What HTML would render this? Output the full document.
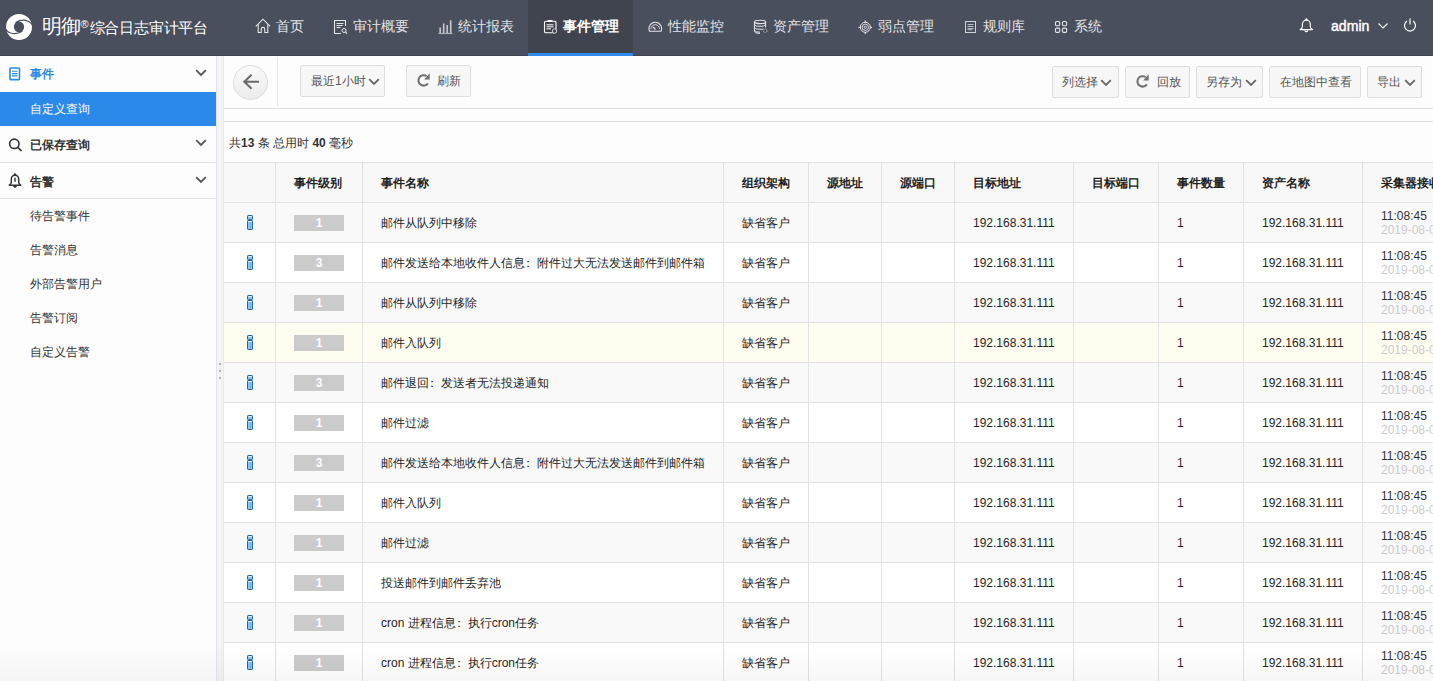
<!DOCTYPE html>
<html><head><meta charset="utf-8">
<style>
*{box-sizing:border-box;margin:0;padding:0}
html,body{width:1433px;height:681px;overflow:hidden;background:#fdfdfd;font-family:"Liberation Sans",sans-serif;color:#333}
#hdr{position:absolute;left:0;top:0;width:1433px;height:56px;background:#4a4f5d;border-bottom:1px solid #40444f}
#logo{position:absolute;left:6px;top:14px;width:26px;height:26px}
#brand{position:absolute;left:42px;top:13px;color:#fff;white-space:nowrap}
#brand .b1{font-size:20px;letter-spacing:-1px}
#brand .r{font-size:11px;vertical-align:5px;margin-left:0.5px;margin-right:1px}
#brand .b2{font-size:15px;letter-spacing:-0.2px}
.nav{position:absolute;top:0;height:56px;color:#e2e3e6;font-size:14px;white-space:nowrap}
.nav .t{position:absolute;top:15.6px;line-height:20px}
.nav svg{position:absolute}
.nav.act{background:#40444f;color:#fff}
.nav.act:after{content:"";position:absolute;left:0;right:0;bottom:0;height:3px;background:#2d8ae9}
#side{position:absolute;left:0;top:56px;width:217px;height:625px;background:#fdfdfd;border-right:1px solid #e4e4ee}
.sh{position:absolute;left:0;width:216px;font-size:12px;font-weight:bold;color:#333}
.sh .t{position:absolute;left:30px}
.si{position:absolute;left:30px;font-size:12px;color:#333}
#split{position:absolute;left:217px;top:56px;width:7px;height:625px;background:#f3f3f3;border-right:1px solid #e8e8e8}
#main{position:absolute;left:224px;top:56px;width:1209px;height:625px;background:#fdfdfd;overflow:hidden}
.btn{position:absolute;top:9px;height:32px;background:#f7f7f7;border:1px solid #dedede;border-radius:2px;font-size:12px;color:#555;white-space:nowrap}
.btn .t{position:absolute;top:8px;line-height:14px}
table{position:absolute;left:0;top:106px;width:1289px;border-collapse:separate;border-spacing:0;table-layout:fixed;font-size:12px}
td,th{border-right:1px solid #e2e2e2;border-bottom:1px solid #e2e2e2;height:40px;padding:1px 0 0 18px;text-align:left;white-space:nowrap;overflow:hidden}
th{border-top:1px solid #e2e2e2;height:41px}
th{background:#f8f8f8;font-weight:bold;color:#222}
tr.o td{background:#f9f9f9}
tr.e td{background:#fff}
tr.h td{background:#fffdf0}
td{color:#262626}
.lv{display:inline-block;width:50px;height:16px;background:#cbcbcb;color:#fff;text-align:center;line-height:16px;font-size:12px;font-weight:bold;vertical-align:middle}
.ico{display:block;margin-left:5px;margin-top:-1px}
.tm{line-height:14px;color:#333}
.tm span{color:#ccc}
</style></head><body>
<div id="hdr">
 <svg id="logo" viewBox="0 0 26 26"><circle cx="13" cy="13" r="13" fill="#fff"/><ellipse cx="13" cy="12.9" rx="5.1" ry="5.5" fill="#4a4f5d"/><path d="M9.6 8.6 Q14 5.8 19.5 6.3 Q24 7 26.6 11.3" fill="none" stroke="#4a4f5d" stroke-width="1.25"/><path d="M16.4 17.2 Q12 20 6.5 19.5 Q2 19 -0.6 14.7" fill="none" stroke="#4a4f5d" stroke-width="1.25"/></svg>
 <div id="brand"><span class="b1">明御</span><span class="r">®</span><span class="b2">综合日志审计平台</span></div>
 <div class="nav" style="left:241px;width:77px"><svg width="17" height="16" style="left:14px;top:18px" viewBox="0 0 17 16"><path d="M0.8 8.3L8 1.2L15.2 8.3" fill="none" stroke="#e4e5e8" stroke-width="1.1"/><path d="M3.2 6.3V14.5H6.2V11.2A1.8 1.8 0 0 1 9.8 11.2V14.5H12.8V6.3" fill="none" stroke="#e4e5e8" stroke-width="1.1"/></svg><span class="t" style="left:35px">首页</span></div>
 <div class="nav" style="left:318px;width:105px"><svg width="15" height="16" style="left:15px;top:19px" viewBox="0 0 15 16"><path d="M12.5 7V1.5H1.5V14.5H8" fill="none" stroke="#e4e5e8" stroke-width="1.1"/><path d="M3.5 4.5H10.5M3.5 6.5H9.5M3.5 8.5H7.5" stroke="#e4e5e8" stroke-width="1"/><circle cx="11" cy="11.5" r="2" fill="none" stroke="#e4e5e8" stroke-width="1"/><path d="M12.4 13L14 14.6" stroke="#e4e5e8" stroke-width="1.1"/></svg><span class="t" style="left:35px">审计概要</span></div>
 <div class="nav" style="left:423px;width:105px"><svg width="15" height="16" style="left:15px;top:19px" viewBox="0 0 15 16"><path d="M2.2 14V8.5M5.7 14V4.5M9.2 14V6M12.7 14V1.2" stroke="#c4c6cc" stroke-width="1.7"/><path d="M0.5 14.5H14.5" stroke="#aeb0b8" stroke-width="1.2"/></svg><span class="t" style="left:35px">统计报表</span></div>
 <div class="nav act" style="left:528px;width:105px"><svg width="16" height="16" style="left:15px;top:19px" viewBox="0 0 16 16"><rect x="1.5" y="2.3" width="11.5" height="11.5" rx="1.2" fill="none" stroke="#fff" stroke-width="1.1"/><rect x="4.5" y="1" width="5" height="2" rx="0.8" fill="#fff"/><path d="M3.5 5.8H10.5M3.5 7.8H10.5M3.5 9.8H8" stroke="#fff" stroke-width="1"/><circle cx="11.5" cy="12" r="2.2" fill="#40444f" stroke="#cfd0d4" stroke-width="1"/></svg><span class="t" style="left:35px;font-weight:bold">事件管理</span></div>
 <div class="nav" style="left:633px;width:105px"><svg width="15" height="14" style="left:15px;top:20px" viewBox="0 0 15 14"><path d="M1.6 11.3A6.3 6.3 0 1 1 13 11.3Z" fill="none" stroke="#e4e5e8" stroke-width="1.1"/><path d="M3.1 8.9A4.2 4.2 0 0 1 11.5 8.9" fill="none" stroke="#e4e5e8" stroke-width="0.9"/><path d="M5.2 6.9L7.4 9.6" stroke="#e4e5e8" stroke-width="1.4"/></svg><span class="t" style="left:35px">性能监控</span></div>
 <div class="nav" style="left:738px;width:105px"><svg width="16" height="16" style="left:15px;top:19px" viewBox="0 0 16 16"><ellipse cx="7" cy="2.9" rx="5.6" ry="1.7" fill="none" stroke="#e4e5e8" stroke-width="1.1"/><path d="M1.4 2.9V12.6Q1.6 14.4 7 14.4M12.6 2.9V8.5M1.4 5.8Q3 7.4 7 7.4T12.6 5.8M1.4 8.8Q3 10.3 7 10.3T10.5 10M1.4 11.7Q3 13.2 7 13.2" fill="none" stroke="#e4e5e8" stroke-width="1"/><circle cx="12.2" cy="11.8" r="1.8" fill="none" stroke="#b8bac0" stroke-width="1" stroke-dasharray="1.2 0.7"/></svg><span class="t" style="left:35px">资产管理</span></div>
 <div class="nav" style="left:843px;width:105px"><svg width="15" height="15" style="left:15.3px;top:19.8px" viewBox="0 0 15 15"><circle cx="7.3" cy="7.3" r="5" fill="none" stroke="#e4e5e8" stroke-width="1"/><circle cx="7.3" cy="7.3" r="3.2" fill="none" stroke="#e4e5e8" stroke-width="0.9"/><circle cx="7.3" cy="7.3" r="1.2" fill="none" stroke="#e4e5e8" stroke-width="0.9"/><path d="M7.3 0.6V2.6M7.3 12V14M0.6 7.3H2.5M12.1 7.3H14" stroke="#e4e5e8" stroke-width="1.2"/></svg><span class="t" style="left:35px">弱点管理</span></div>
 <div class="nav" style="left:948px;width:91px"><svg width="13" height="14" style="left:16px;top:20px" viewBox="0 0 13 14"><rect x="1.5" y="1.5" width="10" height="11" fill="none" stroke="#d0d2d7" stroke-width="1"/><path d="M3.5 4.5H9.5M3.5 6.5H9.5M3.5 8.5H9.5M3.5 9.8H8.5" stroke="#c4c6cc" stroke-width="0.9"/></svg><span class="t" style="left:35px">规则库</span></div>
 <div class="nav" style="left:1039px;width:77px"><svg width="14" height="14" style="left:15px;top:20px" viewBox="0 0 14 14"><rect x="1.5" y="1.5" width="4.2" height="4.3" rx="1.2" fill="none" stroke="#e4e5e8" stroke-width="1.1"/><rect x="8.45" y="1.5" width="4.2" height="4.3" rx="1.2" fill="none" stroke="#e4e5e8" stroke-width="1.1"/><rect x="1.5" y="8.1" width="4.2" height="4.3" rx="1.2" fill="none" stroke="#e4e5e8" stroke-width="1.1"/><rect x="8.45" y="8.1" width="4.2" height="4.3" rx="1.2" fill="none" stroke="#e4e5e8" stroke-width="1.1"/></svg><span class="t" style="left:35px">系统</span></div>
 <svg style="position:absolute;left:1299px;top:17px" width="15" height="16" viewBox="0 0 15 16"><path d="M1.2 12.6Q3.3 11.6 3.4 9.5V7.2A3.95 4.1 0 0 1 11.3 7.2V9.5Q11.5 11.6 13.6 12.6Z" fill="none" stroke="#fff" stroke-width="1.15" stroke-linejoin="round"/><circle cx="7.35" cy="2.3" r="1.1" fill="#fff"/><path d="M6 13.3A1.35 1.35 0 0 0 8.7 13.3" fill="none" stroke="#fff" stroke-width="1.1"/></svg>
 <div style="position:absolute;left:1331px;top:16px;font-size:15px;color:#fff;line-height:20px;-webkit-text-stroke:0.45px #fff;transform:scaleX(0.94);transform-origin:0 0">admin</div>
 <svg style="position:absolute;left:1378px;top:23px" width="10" height="6" viewBox="0 0 10 6"><path d="M0.5 0.5L5 5L9.5 0.5" fill="none" stroke="#fff" stroke-width="1.1"/></svg>
 <svg style="position:absolute;left:1403px;top:18px" width="14" height="14" viewBox="0 0 14 14"><path d="M4 3A5.5 5.5 0 1 0 10 3" fill="none" stroke="#fff" stroke-width="1.2"/><path d="M7 0.5V6.5" stroke="#fff" stroke-width="1.2"/></svg>
</div>

<div id="side">
 <div class="sh" style="top:0;height:36px;color:#2b88e5"><svg style="position:absolute;left:9px;top:11px" width="12" height="14" viewBox="0 0 12 14"><rect x="1" y="1" width="9.5" height="11.6" rx="0.8" fill="none" stroke="#2b88e5" stroke-width="1.6"/><path d="M3 4.3H8.5M3 6.6H8.5M3 8.9H8.5" stroke="#2b88e5" stroke-width="1.1"/></svg><span class="t" style="top:10px">事件</span><svg style="position:absolute;left:195px;top:13px" width="12" height="8" viewBox="0 0 12 8"><path d="M1.2 1.2L6 6L10.8 1.2" fill="none" stroke="#555" stroke-width="1.8"/></svg></div>
 <div style="position:absolute;left:0;top:36px;width:216px;height:34px;background:#2b89e9"></div>
 <div class="si" style="top:45px;color:#fff">自定义查询</div>
 <div class="sh" style="top:70px;height:37px;border-bottom:1px solid #e2e2e2"><svg style="position:absolute;left:8px;top:11px" width="16" height="16" viewBox="0 0 16 16"><circle cx="6.3" cy="6.8" r="4.7" fill="none" stroke="#333" stroke-width="1.6"/><path d="M9.8 10.3L13.5 14" stroke="#333" stroke-width="1.7"/></svg><span class="t" style="top:11px">已保存查询</span><svg style="position:absolute;left:195px;top:13px" width="12" height="8" viewBox="0 0 12 8"><path d="M1.2 1.2L6 6L10.8 1.2" fill="none" stroke="#555" stroke-width="1.8"/></svg></div>
 <div class="sh" style="top:107px;height:36px;border-bottom:1px solid #e2e2e2"><svg style="position:absolute;left:8px;top:9px" width="15" height="16" viewBox="0 0 15 16"><path d="M1.3 13.2Q3.2 12.3 3.3 10.3V7.2A3.7 4 0 0 1 10.7 7.2V10.3Q10.8 12.3 12.7 13.2Z" fill="none" stroke="#333" stroke-width="1.5" stroke-linejoin="round"/><circle cx="7" cy="2.4" r="1.2" fill="#333"/><path d="M7 5.8V9.8" stroke="#333" stroke-width="1.4"/><path d="M5.6 14A1.4 1.4 0 0 0 8.4 14Z" fill="#333" stroke="#333" stroke-width="0.8"/></svg><span class="t" style="top:11px">告警</span><svg style="position:absolute;left:195px;top:13px" width="12" height="8" viewBox="0 0 12 8"><path d="M1.2 1.2L6 6L10.8 1.2" fill="none" stroke="#555" stroke-width="1.8"/></svg></div>
 <div class="si" style="top:152px">待告警事件</div>
 <div class="si" style="top:186px">告警消息</div>
 <div class="si" style="top:220px">外部告警用户</div>
 <div class="si" style="top:254px">告警订阅</div>
 <div class="si" style="top:288px">自定义告警</div>
</div>
<div id="split"><div style="position:absolute;left:2px;top:307px;width:2px;height:2px;background:#b4b4b4"></div><div style="position:absolute;left:2px;top:314px;width:2px;height:2px;background:#b4b4b4"></div><div style="position:absolute;left:2px;top:321px;width:2px;height:2px;background:#b4b4b4"></div></div>

<div id="main">
 <div style="position:absolute;left:9px;top:9px;width:35px;height:35px;border-radius:50%;background:linear-gradient(#fafafa,#ececec);border:1px solid #dcdcdc"><svg style="position:absolute;left:-1px;top:-1px" width="35" height="35" viewBox="0 0 35 35"><path d="M26 16.8H11.5M18.6 9.8L11.3 16.8L18.6 23.8" fill="none" stroke="#6a6a6a" stroke-width="2"/></svg></div>
 <div style="position:absolute;left:53px;top:1px;width:1px;height:49px;background:#e6e6e6"></div>
 <div class="btn" style="left:76px;width:85px"><span class="t" style="left:10px">最近1小时</span><svg style="position:absolute;left:67px;top:12px" width="12" height="8" viewBox="0 0 12 8"><path d="M1.2 1.2L6 6L10.8 1.2" fill="none" stroke="#666" stroke-width="1.8"/></svg></div>
 <div class="btn" style="left:182px;width:65px"><svg style="position:absolute;left:10px;top:7px" width="16" height="16" viewBox="0 0 16 16"><path d="M9.6 3.2A5.2 5.2 0 1 0 10.9 10.4" fill="none" stroke="#727272" stroke-width="2.1"/><path d="M12.7 0.3V6.6H7.1Z" fill="#727272"/></svg><span class="t" style="left:30px">刷新</span></div>
 <div class="btn" style="top:10px;left:828px;width:67px"><span class="t" style="left:9px">列选择</span><svg style="position:absolute;left:47px;top:12px" width="12" height="8" viewBox="0 0 12 8"><path d="M1.2 1.2L6 6L10.8 1.2" fill="none" stroke="#666" stroke-width="1.8"/></svg></div>
 <div class="btn" style="top:10px;left:901px;width:65px"><svg style="position:absolute;left:10px;top:7px" width="16" height="16" viewBox="0 0 16 16"><path d="M9.6 3.2A5.2 5.2 0 1 0 10.9 10.4" fill="none" stroke="#727272" stroke-width="2.1"/><path d="M12.7 0.3V6.6H7.1Z" fill="#727272"/></svg><span class="t" style="left:31px">回放</span></div>
 <div class="btn" style="top:10px;left:972px;width:67px"><span class="t" style="left:9px">另存为</span><svg style="position:absolute;left:48px;top:12px" width="12" height="8" viewBox="0 0 12 8"><path d="M1.2 1.2L6 6L10.8 1.2" fill="none" stroke="#666" stroke-width="1.8"/></svg></div>
 <div class="btn" style="top:10px;left:1045px;width:92px"><span class="t" style="left:10px">在地图中查看</span></div>
 <div class="btn" style="top:10px;left:1143px;width:55px"><span class="t" style="left:9px">导出</span><svg style="position:absolute;left:36px;top:12px" width="12" height="8" viewBox="0 0 12 8"><path d="M1.2 1.2L6 6L10.8 1.2" fill="none" stroke="#666" stroke-width="1.8"/></svg></div>
 <div style="position:absolute;left:0;top:52px;width:1209px;height:1px;background:#dfdfe3"></div>
 <div style="position:absolute;left:0;top:65px;width:1209px;height:1px;background:#dfdfe3"></div>
 <div style="position:absolute;left:5px;top:79px;font-size:12px;color:#333">共<b>13</b> 条 总用时 <b>40</b> 毫秒</div>
 <table>
  <colgroup><col style="width:52px"><col style="width:87px"><col style="width:361px"><col style="width:85px"><col style="width:73px"><col style="width:73px"><col style="width:119px"><col style="width:85px"><col style="width:85px"><col style="width:119px"><col style="width:150px"></colgroup>
  <tr><th></th><th>事件级别</th><th>事件名称</th><th>组织架构</th><th>源地址</th><th>源端口</th><th>目标地址</th><th>目标端口</th><th>事件数量</th><th>资产名称</th><th>采集器接收时间</th></tr>
  <tr class="o"><td><svg class="ico" width="6" height="15" viewBox="0 0 6 15"><rect x="0.5" y="0.5" width="5" height="4.1" rx="0.7" fill="#8ccaf3" stroke="#1f62a8" stroke-width="1"/><rect x="0.5" y="5.5" width="5" height="9" rx="0.7" fill="#8ccaf3" stroke="#1f62a8" stroke-width="1"/><path d="M1.5 1.5H4.5M1.5 6.5H4.5" stroke="#eaf6ff" stroke-width="0.9"/><path d="M3.2 7.6V13.5" stroke="#4f9fe0" stroke-width="0.8"/></svg></td><td><span class="lv">1</span></td><td>邮件从队列中移除</td><td>缺省客户</td><td></td><td></td><td>192.168.31.111</td><td></td><td>1</td><td>192.168.31.111</td><td><div class="tm">11:08:45<br><span>2019-08-05</span></div></td></tr>
  <tr class="e"><td><svg class="ico" width="6" height="15" viewBox="0 0 6 15"><rect x="0.5" y="0.5" width="5" height="4.1" rx="0.7" fill="#8ccaf3" stroke="#1f62a8" stroke-width="1"/><rect x="0.5" y="5.5" width="5" height="9" rx="0.7" fill="#8ccaf3" stroke="#1f62a8" stroke-width="1"/><path d="M1.5 1.5H4.5M1.5 6.5H4.5" stroke="#eaf6ff" stroke-width="0.9"/><path d="M3.2 7.6V13.5" stroke="#4f9fe0" stroke-width="0.8"/></svg></td><td><span class="lv">3</span></td><td>邮件发送给本地收件人信息<span style="position:relative;left:-3px">：</span>附件过大无法发送邮件到邮件箱</td><td>缺省客户</td><td></td><td></td><td>192.168.31.111</td><td></td><td>1</td><td>192.168.31.111</td><td><div class="tm">11:08:45<br><span>2019-08-05</span></div></td></tr>
  <tr class="o"><td><svg class="ico" width="6" height="15" viewBox="0 0 6 15"><rect x="0.5" y="0.5" width="5" height="4.1" rx="0.7" fill="#8ccaf3" stroke="#1f62a8" stroke-width="1"/><rect x="0.5" y="5.5" width="5" height="9" rx="0.7" fill="#8ccaf3" stroke="#1f62a8" stroke-width="1"/><path d="M1.5 1.5H4.5M1.5 6.5H4.5" stroke="#eaf6ff" stroke-width="0.9"/><path d="M3.2 7.6V13.5" stroke="#4f9fe0" stroke-width="0.8"/></svg></td><td><span class="lv">1</span></td><td>邮件从队列中移除</td><td>缺省客户</td><td></td><td></td><td>192.168.31.111</td><td></td><td>1</td><td>192.168.31.111</td><td><div class="tm">11:08:45<br><span>2019-08-05</span></div></td></tr>
  <tr class="h"><td><svg class="ico" width="6" height="15" viewBox="0 0 6 15"><rect x="0.5" y="0.5" width="5" height="4.1" rx="0.7" fill="#8ccaf3" stroke="#1f62a8" stroke-width="1"/><rect x="0.5" y="5.5" width="5" height="9" rx="0.7" fill="#8ccaf3" stroke="#1f62a8" stroke-width="1"/><path d="M1.5 1.5H4.5M1.5 6.5H4.5" stroke="#eaf6ff" stroke-width="0.9"/><path d="M3.2 7.6V13.5" stroke="#4f9fe0" stroke-width="0.8"/></svg></td><td><span class="lv">1</span></td><td>邮件入队列</td><td>缺省客户</td><td></td><td></td><td>192.168.31.111</td><td></td><td>1</td><td>192.168.31.111</td><td><div class="tm">11:08:45<br><span>2019-08-05</span></div></td></tr>
  <tr class="o"><td><svg class="ico" width="6" height="15" viewBox="0 0 6 15"><rect x="0.5" y="0.5" width="5" height="4.1" rx="0.7" fill="#8ccaf3" stroke="#1f62a8" stroke-width="1"/><rect x="0.5" y="5.5" width="5" height="9" rx="0.7" fill="#8ccaf3" stroke="#1f62a8" stroke-width="1"/><path d="M1.5 1.5H4.5M1.5 6.5H4.5" stroke="#eaf6ff" stroke-width="0.9"/><path d="M3.2 7.6V13.5" stroke="#4f9fe0" stroke-width="0.8"/></svg></td><td><span class="lv">3</span></td><td>邮件退回<span style="position:relative;left:-3px">：</span>发送者无法投递通知</td><td>缺省客户</td><td></td><td></td><td>192.168.31.111</td><td></td><td>1</td><td>192.168.31.111</td><td><div class="tm">11:08:45<br><span>2019-08-05</span></div></td></tr>
  <tr class="e"><td><svg class="ico" width="6" height="15" viewBox="0 0 6 15"><rect x="0.5" y="0.5" width="5" height="4.1" rx="0.7" fill="#8ccaf3" stroke="#1f62a8" stroke-width="1"/><rect x="0.5" y="5.5" width="5" height="9" rx="0.7" fill="#8ccaf3" stroke="#1f62a8" stroke-width="1"/><path d="M1.5 1.5H4.5M1.5 6.5H4.5" stroke="#eaf6ff" stroke-width="0.9"/><path d="M3.2 7.6V13.5" stroke="#4f9fe0" stroke-width="0.8"/></svg></td><td><span class="lv">1</span></td><td>邮件过滤</td><td>缺省客户</td><td></td><td></td><td>192.168.31.111</td><td></td><td>1</td><td>192.168.31.111</td><td><div class="tm">11:08:45<br><span>2019-08-05</span></div></td></tr>
  <tr class="o"><td><svg class="ico" width="6" height="15" viewBox="0 0 6 15"><rect x="0.5" y="0.5" width="5" height="4.1" rx="0.7" fill="#8ccaf3" stroke="#1f62a8" stroke-width="1"/><rect x="0.5" y="5.5" width="5" height="9" rx="0.7" fill="#8ccaf3" stroke="#1f62a8" stroke-width="1"/><path d="M1.5 1.5H4.5M1.5 6.5H4.5" stroke="#eaf6ff" stroke-width="0.9"/><path d="M3.2 7.6V13.5" stroke="#4f9fe0" stroke-width="0.8"/></svg></td><td><span class="lv">3</span></td><td>邮件发送给本地收件人信息<span style="position:relative;left:-3px">：</span>附件过大无法发送邮件到邮件箱</td><td>缺省客户</td><td></td><td></td><td>192.168.31.111</td><td></td><td>1</td><td>192.168.31.111</td><td><div class="tm">11:08:45<br><span>2019-08-05</span></div></td></tr>
  <tr class="e"><td><svg class="ico" width="6" height="15" viewBox="0 0 6 15"><rect x="0.5" y="0.5" width="5" height="4.1" rx="0.7" fill="#8ccaf3" stroke="#1f62a8" stroke-width="1"/><rect x="0.5" y="5.5" width="5" height="9" rx="0.7" fill="#8ccaf3" stroke="#1f62a8" stroke-width="1"/><path d="M1.5 1.5H4.5M1.5 6.5H4.5" stroke="#eaf6ff" stroke-width="0.9"/><path d="M3.2 7.6V13.5" stroke="#4f9fe0" stroke-width="0.8"/></svg></td><td><span class="lv">1</span></td><td>邮件入队列</td><td>缺省客户</td><td></td><td></td><td>192.168.31.111</td><td></td><td>1</td><td>192.168.31.111</td><td><div class="tm">11:08:45<br><span>2019-08-05</span></div></td></tr>
  <tr class="o"><td><svg class="ico" width="6" height="15" viewBox="0 0 6 15"><rect x="0.5" y="0.5" width="5" height="4.1" rx="0.7" fill="#8ccaf3" stroke="#1f62a8" stroke-width="1"/><rect x="0.5" y="5.5" width="5" height="9" rx="0.7" fill="#8ccaf3" stroke="#1f62a8" stroke-width="1"/><path d="M1.5 1.5H4.5M1.5 6.5H4.5" stroke="#eaf6ff" stroke-width="0.9"/><path d="M3.2 7.6V13.5" stroke="#4f9fe0" stroke-width="0.8"/></svg></td><td><span class="lv">1</span></td><td>邮件过滤</td><td>缺省客户</td><td></td><td></td><td>192.168.31.111</td><td></td><td>1</td><td>192.168.31.111</td><td><div class="tm">11:08:45<br><span>2019-08-05</span></div></td></tr>
  <tr class="e"><td><svg class="ico" width="6" height="15" viewBox="0 0 6 15"><rect x="0.5" y="0.5" width="5" height="4.1" rx="0.7" fill="#8ccaf3" stroke="#1f62a8" stroke-width="1"/><rect x="0.5" y="5.5" width="5" height="9" rx="0.7" fill="#8ccaf3" stroke="#1f62a8" stroke-width="1"/><path d="M1.5 1.5H4.5M1.5 6.5H4.5" stroke="#eaf6ff" stroke-width="0.9"/><path d="M3.2 7.6V13.5" stroke="#4f9fe0" stroke-width="0.8"/></svg></td><td><span class="lv">1</span></td><td>投送邮件到邮件丢弃池</td><td>缺省客户</td><td></td><td></td><td>192.168.31.111</td><td></td><td>1</td><td>192.168.31.111</td><td><div class="tm">11:08:45<br><span>2019-08-05</span></div></td></tr>
  <tr class="o"><td><svg class="ico" width="6" height="15" viewBox="0 0 6 15"><rect x="0.5" y="0.5" width="5" height="4.1" rx="0.7" fill="#8ccaf3" stroke="#1f62a8" stroke-width="1"/><rect x="0.5" y="5.5" width="5" height="9" rx="0.7" fill="#8ccaf3" stroke="#1f62a8" stroke-width="1"/><path d="M1.5 1.5H4.5M1.5 6.5H4.5" stroke="#eaf6ff" stroke-width="0.9"/><path d="M3.2 7.6V13.5" stroke="#4f9fe0" stroke-width="0.8"/></svg></td><td><span class="lv">1</span></td><td>cron 进程信息<span style="position:relative;left:-3px">：</span>执行cron任务</td><td>缺省客户</td><td></td><td></td><td>192.168.31.111</td><td></td><td>1</td><td>192.168.31.111</td><td><div class="tm">11:08:45<br><span>2019-08-05</span></div></td></tr>
  <tr class="e"><td><svg class="ico" width="6" height="15" viewBox="0 0 6 15"><rect x="0.5" y="0.5" width="5" height="4.1" rx="0.7" fill="#8ccaf3" stroke="#1f62a8" stroke-width="1"/><rect x="0.5" y="5.5" width="5" height="9" rx="0.7" fill="#8ccaf3" stroke="#1f62a8" stroke-width="1"/><path d="M1.5 1.5H4.5M1.5 6.5H4.5" stroke="#eaf6ff" stroke-width="0.9"/><path d="M3.2 7.6V13.5" stroke="#4f9fe0" stroke-width="0.8"/></svg></td><td><span class="lv">1</span></td><td>cron 进程信息<span style="position:relative;left:-3px">：</span>执行cron任务</td><td>缺省客户</td><td></td><td></td><td>192.168.31.111</td><td></td><td>1</td><td>192.168.31.111</td><td><div class="tm">11:08:45<br><span>2019-08-05</span></div></td></tr>
 </table>
</div>
<div style="position:absolute;left:0;top:646px;width:1433px;height:35px;background:linear-gradient(rgba(0,0,0,0),rgba(0,0,0,0.03))"></div>
</body></html>
